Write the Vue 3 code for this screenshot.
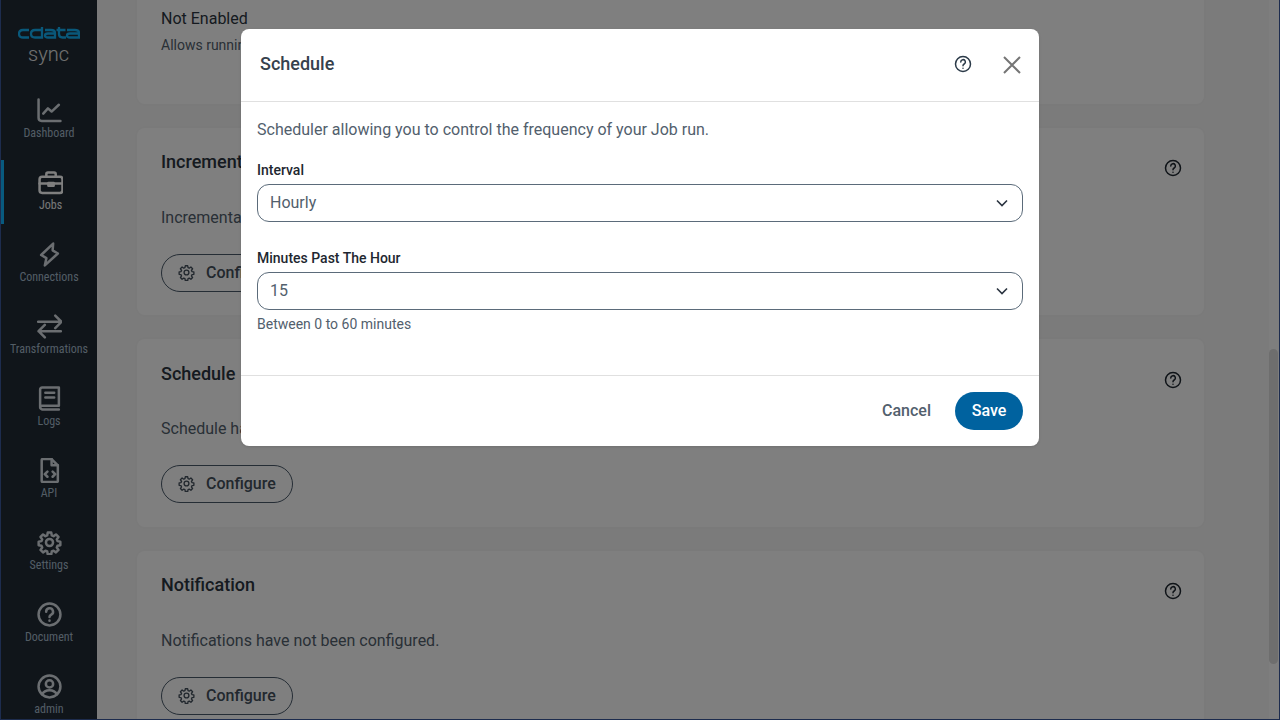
<script setup>
const navItems = [
  { label: 'Dashboard', icon: 'chart' },
  { label: 'Jobs', icon: 'case', active: true },
  { label: 'Connections', icon: 'bolt' },
  { label: 'Transformations', icon: 'swap' },
  { label: 'Logs', icon: 'book' },
  { label: 'API', icon: 'file' },
  { label: 'Settings', icon: 'gear' },
  { label: 'Document', icon: 'help' },
  { label: 'admin', icon: 'user' }
]
const gear = 'M12 8.600a3.400 3.400 0 1 0 0 6.800 3.400 3.400 0 0 0 0-6.800Z M10.300 2.500h3.400l.5 2.700 1.700.7 2.300-1.600 2.400 2.400-1.600 2.300.7 1.700 2.700.5v3.400l-2.700.5-.7 1.700 1.600 2.300-2.400 2.400-2.300-1.600-1.700.7-.5 2.700h-3.400l-.5-2.700-1.700-.7-2.300 1.600-2.400-2.400 1.600-2.300-.7-1.700-2.700-.5v-3.400l2.700-.5.7-1.700-1.600-2.300 2.400-2.400 2.300 1.600 1.700-.7Z'
const cards = [
  { title: 'Incremental Replication', text: 'Incremental replication has not been configured.' },
  { title: 'Schedule', text: 'Schedule has not been configured.' },
  { title: 'Notification', text: 'Notifications have not been configured.' }
]
</script>

<template>
  <div class="page">
    <aside class="side">
      <div class="logo">
        <svg class="logo-mark" viewBox="0 0 62 12" width="62" height="12" fill="none" stroke="#12b0f5" stroke-width="2.300">
          <path d="M11 3H5Q1 3 1 6.750T5 10.500H11" />
          <path d="M24 0V10.500H17Q13 10.500 13 6.750T17 3H24" />
          <path d="M27 3H33Q37 3 37 6V10.500H30Q27 10.500 27 8.500T30 6.500H37" />
          <path d="M41 0V7Q41 10.500 44.500 10.500H48M38.500 3H47.500" />
          <path d="M49 3H57Q61 3 61 6V10.500H52Q49 10.500 49 8.500T52 6.500H61" />
        </svg>
        <div class="logo-sync">sync</div>
      </div>
      <nav class="nav">
        <a v-for="item in navItems" :key="item.label" class="nav-item" :class="{ active: item.active }">
          <svg viewBox="0 0 24 24" width="25" height="25" fill="none" stroke="currentColor" stroke-width="2.400" stroke-linecap="round" stroke-linejoin="round">
            <template v-if="item.icon === 'chart'">
              <path d="M1.500 1.500V19q0 3 3 3h18" /><path d="M6 15l4.500-5 3.500 3 7-6.500" />
            </template>
            <template v-else-if="item.icon === 'case'">
              <rect x="1.500" y="6.500" width="22" height="15.500" rx="2.500" /><path d="M8 6.500V4q0-1.500 1.500-1.500h6Q17 2.500 17 4v2.500M1.500 13h22" /><path d="M10 12.500h5v2.500h-5z" fill="currentColor" />
            </template>
            <template v-else-if="item.icon === 'bolt'">
              <path d="M15.500 1.500 4 12.500l5 3-1.500 7L20 11l-5-3 .5-6.500Z" />
            </template>
            <template v-else-if="item.icon === 'swap'">
              <path d="M1 7.500h22M17.500 1.500l6 6-6 6" /><path d="M23 16.500H1.500M7.500 10.500l-6 6 6 6" />
            </template>
            <template v-else-if="item.icon === 'book'">
              <path d="M3 20V3.500q0-2 2-2h16v17.500H5q-2 0-2 1.500T5 22.500h16" /><path d="M8 6.500h8.500M8 11h8.500" />
            </template>
            <template v-else-if="item.icon === 'file'">
              <path d="M5.500 1h8.500l6 6v15q0 1-1 1H5.500q-1 0-1-1V2q0-1 1-1Z" /><path d="M14 1v6h6M10 13l-2.500 2.500L10 18M15 13l2.500 2.500L15 18" />
            </template>
            <template v-else-if="item.icon === 'gear'">
              <path :d="gear" />
            </template>
            <template v-else-if="item.icon === 'help'">
              <circle cx="12" cy="12" r="10.500" /><path d="M8.800 9.300a3.300 3.300 0 1 1 4.900 2.900c-1.100.6-1.700 1.200-1.700 2.300" /><path d="M12 17.800v.2" />
            </template>
            <template v-else>
              <circle cx="12" cy="12" r="10.500" /><circle cx="12" cy="9.500" r="3.500" /><path d="M4.800 19.500c1.500-2.800 4-4 7.200-4s5.700 1.200 7.200 4" />
            </template>
          </svg>
          <span class="nav-label">{{ item.label }}</span>
        </a>
      </nav>
    </aside>

    <main class="main">
      <div class="content">
        <section class="card first">
          <div class="value">Not Enabled</div>
          <div class="hint">Allows running multiple replications concurrently.</div>
        </section>
        <section v-for="card in cards" :key="card.title" class="card">
          <div class="card-head">
            <h2>{{ card.title }}</h2>
            <svg class="q" viewBox="0 0 24 24" width="18" height="18" fill="none" stroke="currentColor" stroke-width="2" stroke-linecap="round"><circle cx="12" cy="12" r="10" /><path d="M9 9.300a3.100 3.100 0 1 1 4.600 2.700c-1 .6-1.600 1.100-1.600 2.200M12 17.500v.3" /></svg>
          </div>
          <p class="desc">{{ card.text }}</p>
          <button class="outline"><svg viewBox="0 0 24 24" width="17" height="17" fill="none" stroke="currentColor" stroke-width="1.900" stroke-linejoin="round"><path :d="gear" /></svg>Configure</button>
        </section>
      </div>
      <div class="scrollbar"><div class="thumb"></div></div>
    </main>

    <div class="overlay">
      <div class="dialog">
        <header class="dlg-head">
          <h1>Schedule</h1>
          <svg class="dlg-help" viewBox="0 0 24 24" width="18" height="18" fill="none" stroke="currentColor" stroke-width="2" stroke-linecap="round"><circle cx="12" cy="12" r="10" /><path d="M9 9.300a3.100 3.100 0 1 1 4.600 2.700c-1 .6-1.600 1.100-1.600 2.200M12 17.500v.3" /></svg>
          <svg class="dlg-close" viewBox="0 0 18 18" width="18" height="18" fill="none" stroke="#757575" stroke-width="2"><path d="M1 1l16 16M17 1 1 17" /></svg>
        </header>
        <div class="dlg-body">
          <p class="intro">Scheduler allowing you to control the frequency of your Job run.</p>
          <label class="lbl">Interval</label>
          <div class="select"><span>Hourly</span><svg viewBox="0 0 12 8" width="12" height="8" fill="none" stroke="#2b3440" stroke-width="1.600"><path d="M1 1.500l5 5 5-5" /></svg></div>
          <label class="lbl second">Minutes Past The Hour</label>
          <div class="select"><span>15</span><svg viewBox="0 0 12 8" width="12" height="8" fill="none" stroke="#2b3440" stroke-width="1.600"><path d="M1 1.500l5 5 5-5" /></svg></div>
          <div class="help-text">Between 0 to 60 minutes</div>
        </div>
        <footer class="dlg-foot">
          <button class="cancel">Cancel</button>
          <button class="save">Save</button>
        </footer>
      </div>
    </div>
  </div>
</template>

<style>
html, body { margin: 0; height: 100%; overflow: hidden; }
</style>

<style scoped>
.page {
  position: relative;
  display: flex;
  box-sizing: border-box;
  width: 1280px;
  height: 720px;
  overflow: hidden;
  font-family: Roboto, "Liberation Sans", sans-serif;
  background: #f7f7f7;
  border-left: 1px solid #1d2c4e;
  border-right: 1px solid #1d2c4e;
  border-bottom: 1px solid #1d2c4e;
}
.side {
  flex: 0 0 96px;
  background: #202b35;
  display: flex;
  flex-direction: column;
}
.logo {
  flex: none;
  height: 76px;
  box-sizing: border-box;
  padding-top: 27px;
  display: flex;
  flex-direction: column;
  align-items: center;
}
.logo-mark { display: block; flex: none; }
.logo-sync {
  color: #e4e4e4;
  font-size: 20px;
  line-height: 24px;
  font-weight: 300;
  margin-top: 3px;
  margin-left: -1px;
}
.nav { display: flex; flex-direction: column; flex: none; }
.nav-item {
  position: relative;
  flex: none;
  height: 72px;
  box-sizing: border-box;
  padding-top: 22px;
  display: flex;
  flex-direction: column;
  align-items: center;
  color: #d6dce2;
}
.nav-item svg { display: block; margin: 0 0 2px; flex: none; }
.nav-item.active { color: #fff; padding-left: 3px; }
.nav-item.active::before {
  content: "";
  position: absolute;
  left: 0;
  top: 12px;
  bottom: -4px;
  width: 3px;
  background: #10b4ff;
}
.nav-label {
  font-size: 12px;
  line-height: 14px;
  white-space: nowrap;
  margin-top: 1px;
  font-stretch: 75%;
  color: #a6bacb;
}
.nav-item.active .nav-label { color: #f0f0f0; }
.main { flex: 1; position: relative; overflow: hidden; }
.content {
  margin: -93.500px 0 0 40px;
  width: 1067px;
  display: flex;
  flex-direction: column;
  gap: 24px;
}
.card {
  flex: none;
  box-sizing: border-box;
  height: 187.500px;
  padding: 24px;
  background: #fff;
  border-radius: 8px;
  box-shadow: 0 0 6px rgba(0, 0, 0, .03);
}
.card.first { padding-top: 101px; height: 197px; }
.value { font-size: 16px; line-height: 22px; color: #2b3440; }
.hint { font-size: 14px; line-height: 20px; color: #52606d; margin-top: 5px; }
.card-head { display: flex; justify-content: space-between; align-items: flex-start; height: 22px; }
.card-head h2 { margin: -.500px 0 0; font-size: 18px; font-weight: 500; color: #2b3440; line-height: 22px; }
.q { color: #1e2730; margin: 7.500px -2px 0 0; }
.desc { margin: 33px 0 0; font-size: 16px; line-height: 22px; color: #52606d; }
.outline {
  margin-top: 25px;
  box-sizing: border-box;
  width: 132px;
  height: 38px;
  padding: 0 0 1px 16px;
  display: flex;
  align-items: center;
  gap: 11px;
  background: transparent;
  border: 1px solid #4a5a6a;
  border-radius: 19px;
  color: #44505c;
  font: 500 16px Roboto, sans-serif;
}
.scrollbar { position: absolute; right: 0; top: 0; bottom: 0; width: 10px; background: #fdfdfd; }
.thumb { position: absolute; left: 0; right: 1px; top: 349px; height: 315px; background: #dcdcdc; border-radius: 5px; }
.overlay {
  position: absolute;
  inset: 0;
  background: rgba(0, 0, 0, .5);
  display: flex;
  justify-content: center;
  align-items: flex-start;
  padding-top: 29px;
  box-sizing: border-box;
}
.dialog {
  width: 798px;
  height: 417px;
  background: #fff;
  border-radius: 8px;
  display: flex;
  flex-direction: column;
  box-shadow: 0 1px 3px rgba(0, 0, 0, .12);
}
.dlg-head {
  flex: none;
  height: 73px;
  box-sizing: border-box;
  display: flex;
  align-items: center;
  padding: 0 18px 2px 19px;
  border-bottom: 1px solid #e0e0e0;
}
.dlg-head h1 { flex: 1; margin: -2px 0 0; font-size: 18px; font-weight: 500; color: #36414d; }
.dlg-help { color: #2b3a48; margin-right: 31px; }
.dlg-close { margin-top: 2px; }
.dlg-body { flex: 1; padding: 17px 16px 0; }
.intro { margin: 0; font-size: 16px; line-height: 22px; color: #52606d; }
.lbl { display: block; margin-top: 19px; font-size: 14px; line-height: 20px; font-weight: 500; color: #1e2730; }
.lbl.second { margin-top: 26px; }
.select {
  margin-top: 4px;
  box-sizing: border-box;
  height: 38px;
  padding: 0 14px 0 12px;
  display: flex;
  align-items: center;
  justify-content: space-between;
  border: 1px solid #5b6b7a;
  border-radius: 12px;
  color: #52606d;
  font-size: 16px;
}
.select span { margin-top: -2px; }
.help-text { margin-top: 4px; font-size: 14px; line-height: 20px; color: #52606d; }
.dlg-foot {
  flex: none;
  height: 71px;
  box-sizing: border-box;
  border-top: 1px solid #e0e0e0;
  display: flex;
  align-items: center;
  justify-content: flex-end;
  gap: 24px;
  padding: 0 16px;
}
.cancel { background: none; border: 0; padding: 0 0 2px; color: #52606d; font: 500 16px Roboto, sans-serif; }
.save {
  width: 68px;
  height: 38px;
  border: 0;
  padding: 0 0 2px;
  border-radius: 19px;
  background: #00629f;
  color: #fff;
  font: 500 16px Roboto, sans-serif;
}
</style>
